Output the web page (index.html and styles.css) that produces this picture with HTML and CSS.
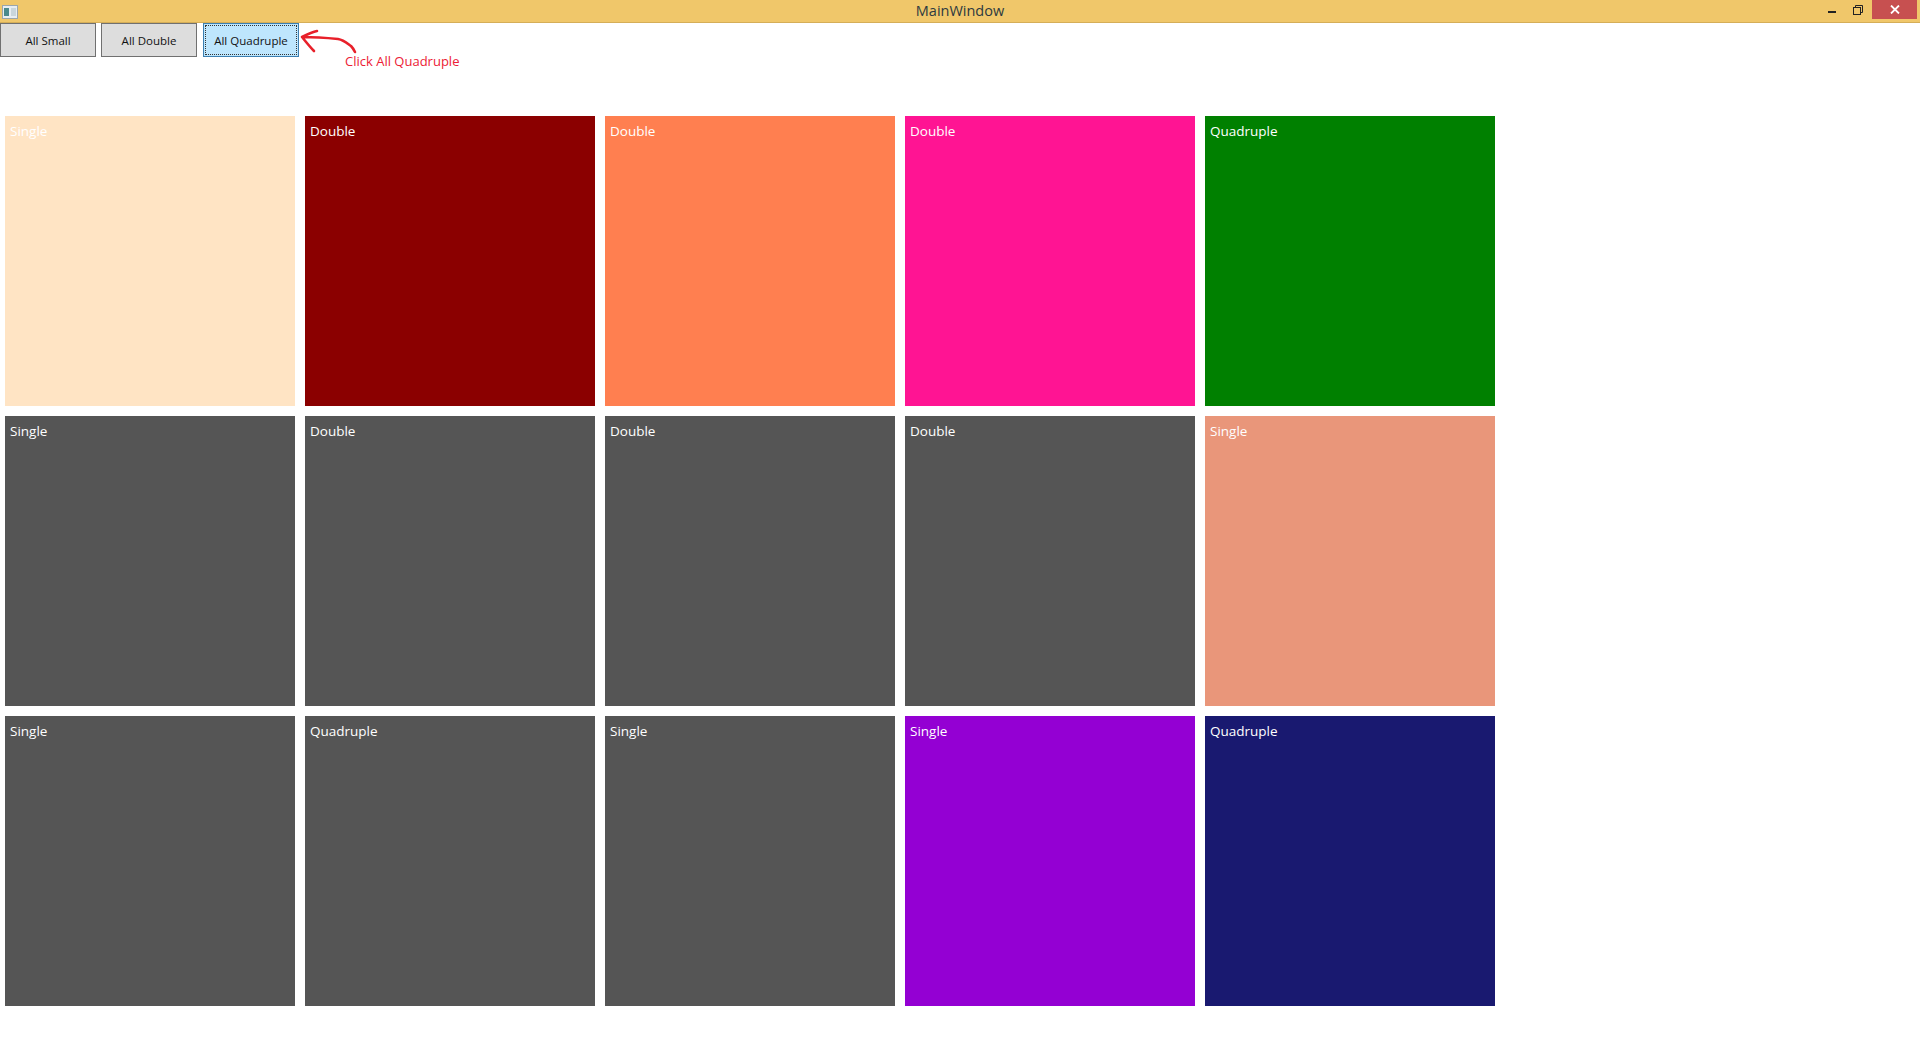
FILE: index.html
```html
<!DOCTYPE html>
<html>
<head>
  <link rel="stylesheet" href="styles.css">
</head>
<body>
  <div class="titlebar">
    <svg class="app-icon" width="16" height="14" viewBox="0 0 16 14">
      <rect x="0.5" y="0.5" width="15" height="13" fill="#e8eef2" stroke="#9aa6ad"/>
      <rect x="2" y="3" width="5" height="8" fill="#4a8a8c"/>
      <rect x="9" y="3" width="5" height="8" fill="#c9d6dc"/>
    </svg>
    <div class="title">MainWindow</div>
    <div class="window-controls">
      <div class="ctl ctl-min"><span></span></div>
      <div class="ctl ctl-restore">
        <svg width="10" height="10" viewBox="0 0 10 10">
          <rect x="0.5" y="2.5" width="7" height="7" fill="none" stroke="#222"/>
          <path d="M2.5 2.5V0.5h7v7h-2" fill="none" stroke="#222"/>
        </svg>
      </div>
      <div class="ctl ctl-close">
        <svg width="10" height="9" viewBox="0 0 10 9">
          <path d="M1 0.5l8 8M9 0.5l-8 8" stroke="#fff" stroke-width="1.8"/>
        </svg>
      </div>
    </div>
  </div>

  <div class="toolbar">
    <button class="btn">All Small</button>
    <button class="btn">All Double</button>
    <button class="btn btn-focused"><span>All Quadruple</span></button>

    <!-- hand-drawn hint next to the last button -->
    <svg class="hint-arrow" width="70" height="36" viewBox="0 0 70 36">
      <path d="M4 13 C10 10 14 8 19 7 M4 13 C8 18 12 23 16 27 M4 13 C18 13 30 14 40 15 C46 16 50 20 53 22 C55 24 56 26 57 28"
            fill="none" stroke="#e8202a" stroke-width="2.6" stroke-linecap="round" stroke-linejoin="round"/>
    </svg>
    <div class="hint-text">Click All Quadruple</div>
  </div>

  <div class="tiles">
    <div class="tile" style="background-color: #ffe4c4;">Single</div>
    <div class="tile" style="background-color: #8b0000;">Double</div>
    <div class="tile" style="background-color: #ff7f50;">Double</div>
    <div class="tile" style="background-color: #ff1493;">Double</div>
    <div class="tile" style="background-color: #008000;">Quadruple</div>

    <div class="tile">Single</div>
    <div class="tile">Double</div>
    <div class="tile">Double</div>
    <div class="tile">Double</div>
    <div class="tile" style="background-color: #e9967a;">Single</div>

    <div class="tile">Single</div>
    <div class="tile">Quadruple</div>
    <div class="tile">Single</div>
    <div class="tile" style="background-color: #9400d3;">Single</div>
    <div class="tile" style="background-color: #191970;">Quadruple</div>
  </div>
</body>
</html>
```

FILE: styles.css
```css
body {
  margin: 0;
  background-color: #ffffff;
  font-family: "Open Sans", "Noto Sans", sans-serif;
}

.titlebar {
  position: relative;
  height: 22px;
  background-color: #f0c76a;
  border-bottom: 1px solid #d5ae58;
  display: flex;
  align-items: center;
}

.app-icon {
  margin-left: 2px;
  margin-top: 1px;
}

.title {
  position: absolute;
  left: 0;
  right: 0;
  top: 0;
  line-height: 22px;
  text-align: center;
  font-size: 14.5px;
  color: #2d3a40;
  pointer-events: none;
}

.window-controls {
  margin-left: auto;
  display: flex;
  align-self: flex-start;
  margin-right: 3px;
}

.ctl {
  height: 19px;
  display: flex;
  align-items: center;
  justify-content: center;
}

.ctl-min {
  width: 26px;
}

.ctl-min span {
  display: block;
  width: 8px;
  height: 2px;
  background-color: #222;
  margin-top: 4px;
}

.ctl-restore {
  width: 26px;
  margin-right: 1px;
}

.ctl-close {
  width: 45px;
  background-color: #c75050;
}

.toolbar {
  position: relative;
  display: flex;
  gap: 5px;
  height: 34px;
}

.btn {
  width: 96px;
  height: 34px;
  margin: 0;
  padding: 0;
  background-color: #dddddd;
  border: 1px solid #707070;
  font-family: "Open Sans", "Noto Sans", sans-serif;
  font-size: 11.5px;
  color: #111;
}

.btn-focused {
  margin-left: 1px;
  background-color: #bee6fd;
  border-color: #3c7fb1;
  padding: 1px;
}

.btn-focused span {
  display: flex;
  height: 100%;
  align-items: center;
  justify-content: center;
  border: 1px dotted #333;
  box-sizing: border-box;
}

.hint-arrow {
  position: absolute;
  left: 298px;
  top: 1px;
}

.hint-text {
  position: absolute;
  left: 345px;
  top: 29px;
  font-size: 13px;
  color: #ec2035;
}

.tiles {
  display: grid;
  grid-template-columns: repeat(5, 290px);
  grid-auto-rows: 290px;
  gap: 10px;
  padding: 59px 5px 0 5px;
}

.tile {
  background-color: #555555;
  color: #ffffff;
  font-size: 13.5px;
  padding: 6px 5px;
  box-sizing: border-box;
}
```
